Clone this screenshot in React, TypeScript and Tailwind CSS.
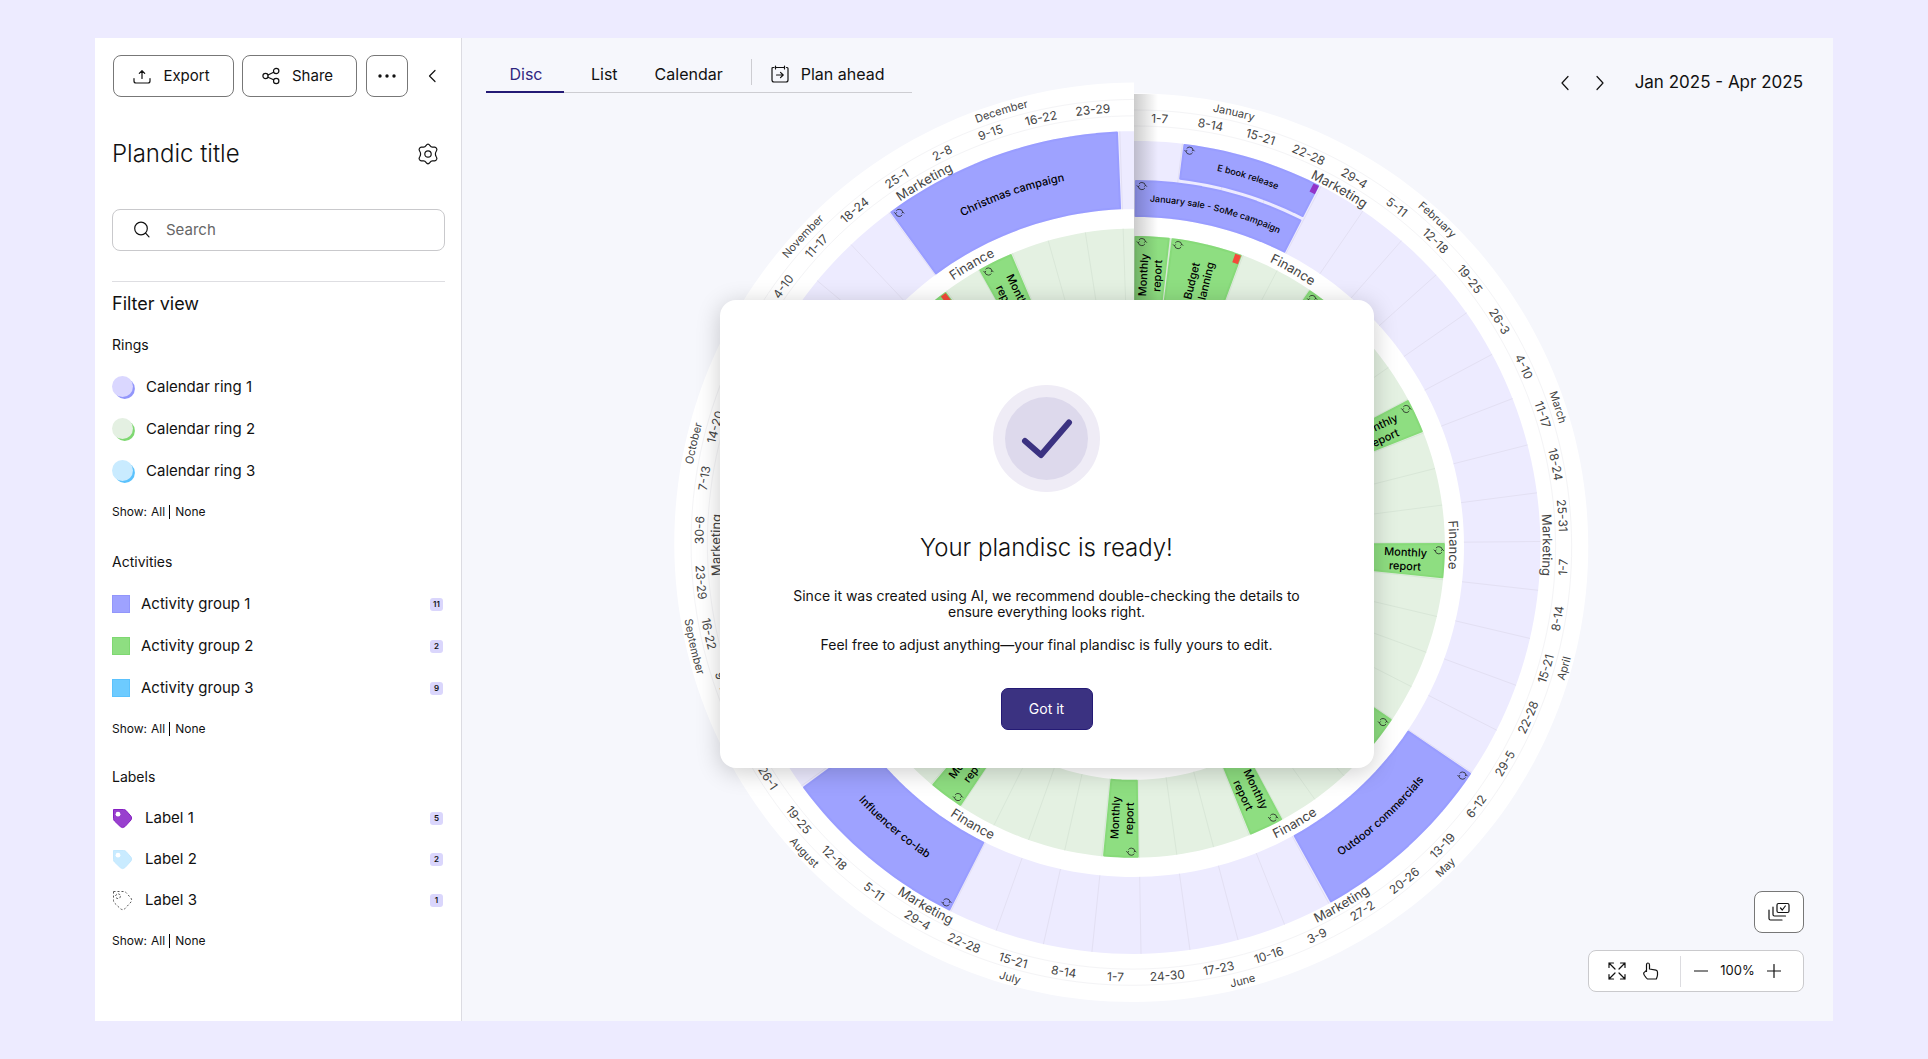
import { clsx } from "clsx";
import { ReactNode, useId } from "react";

const CX = 672;
const CY = 507;
const WEEK = (360 * 7) / 366;

// The disc is a spiral: every radius grows slightly from January to December
const grow = (r: number, deg: number) => r * (1 + (0.0243 * deg) / 360);

const point = (r: number, deg: number) => {
  const a = (deg * Math.PI) / 180;
  return `${(CX + r * Math.sin(a)).toFixed(2)} ${(CY - r * Math.cos(a)).toFixed(2)}`;
};

const arc = (from: number, to: number, r: number) => {
  const steps = Math.max(2, Math.ceil(Math.abs(to - from) / 1.5));
  return Array.from({ length: steps + 1 }, (_, i) => {
    const deg = from + ((to - from) * i) / steps;
    return point(grow(r, deg), deg);
  });
};

const band = (from: number, to: number, inner: number, outer: number) =>
  `M${[...arc(from, to, outer), ...arc(to, from, inner)].join("L")}Z`;

const weeks = [
  "1-7", "8-14", "15-21", "22-28", "29-4", "5-11", "12-18", "19-25", "26-3",
  "4-10", "11-17", "18-24", "25-31", "1-7", "8-14", "15-21", "22-28", "29-5",
  "6-12", "13-19", "20-26", "27-2", "3-9", "10-16", "17-23", "24-30", "1-7",
  "8-14", "15-21", "22-28", "29-4", "5-11", "12-18", "19-25", "26-1", "2-8",
  "9-15", "16-22", "23-29", "30-6", "7-13", "14-20", "21-27", "28-3", "4-10",
  "11-17", "18-24", "25-1", "2-8", "9-15", "16-22", "23-29",
];

const months = [
  { name: "January", deg: 13 },
  { name: "February", deg: 43 },
  { name: "March", deg: 72 },
  { name: "April", deg: 106 },
  { name: "May", deg: 136 },
  { name: "June", deg: 166 },
  { name: "July", deg: 196 },
  { name: "August", deg: 227 },
  { name: "September", deg: 257 },
  { name: "October", deg: 283 },
  { name: "November", deg: 313 },
  { name: "December", deg: 343 },
];

const marketing = [
  { title: "E book release", from: 1, to: 4, inner: 368, outer: 404, size: 9, tag: "#9333c8" },
  { title: "January sale - SoMe campaign", from: 0, to: 4, inner: 328, outer: 365, size: 9 },
  { title: "Outdoor commercials", from: 18, to: 22, inner: 328, outer: 404, size: 11 },
  { title: "Influencer co-lab", from: 30, to: 34, inner: 328, outer: 404, size: 11 },
  { title: "Christmas campaign", from: 47, to: 52, inner: 328, outer: 404, size: 11 },
];

const finance = [
  { lines: ["Monthly", "report"], from: 0, to: 1 },
  { lines: ["Budget", "planning"], from: 1, to: 3, tag: "#f44a3a" },
  { lines: ["Monthly", "report"], from: 5, to: 6 },
  { lines: ["Monthly", "report"], from: 9, to: 10 },
  { lines: ["Monthly", "report"], from: 13, to: 14 },
  { lines: ["Monthly", "report"], from: 18, to: 19 },
  { lines: ["Monthly", "report"], from: 22, to: 23 },
  { lines: ["Monthly", "report"], from: 26, to: 27 },
  { lines: ["Monthly", "report"], from: 31, to: 32 },
  { lines: ["Budget", "planning"], from: 45, to: 47, tag: "#f44a3a" },
  { lines: ["Monthly", "report"], from: 48, to: 49 },
];

type CurvedTextProps = {
  deg: number;
  r: number;
  size: number;
  className?: string;
  children: string;
};

const CurvedText = ({ deg, r, size, className, children }: CurvedTextProps): JSX.Element => {
  const id = useId();
  const flipped = deg > 91 && deg < 269;
  const radius = grow(r, deg) + (flipped ? size : -size) * 0.36;
  const a = flipped ? deg + 20 : deg - 20;
  const b = flipped ? deg - 20 : deg + 20;
  return (
    <>
      <path
        id={id}
        d={`M${point(radius, a)}A${radius} ${radius} 0 0 ${flipped ? 0 : 1} ${point(radius, b)}`}
        fill="none"
      />
      <text fontSize={size} textAnchor="middle" className={className}>
        <textPath href={`#${id}`} startOffset="50%">
          {children}
        </textPath>
      </text>
    </>
  );
};

const Segment = ({
  from,
  to,
  inner,
  outer,
  fill,
  stroke,
  tag,
}: {
  from: number;
  to: number;
  inner: number;
  outer: number;
  fill: string;
  stroke: string;
  tag?: string;
}): JSX.Element => {
  const start = from * WEEK;
  const end = to * WEEK;
  const iconDeg = start + (8 / outer) * 57.3;
  const [ix, iy] = point(grow(outer - 6, iconDeg), iconDeg).split(" ").map(Number);
  const tagDeg = end - (5 / outer) * 57.3;
  const [tx, ty] = point(grow(outer - 5, tagDeg), tagDeg).split(" ").map(Number);
  return (
    <>
      <path
        d={band(start + 0.3, end - 0.4, inner + 1, outer - 1)}
        fill={fill}
        stroke={stroke}
        strokeWidth="2"
        strokeLinejoin="round"
      />
      <g transform={`translate(${ix} ${iy})`} fill="none" stroke="#222" strokeWidth="0.8">
        <circle r="3.6" strokeDasharray="8.300 3" strokeDashoffset="-2" />
        <path d="M-5 -.6L-3.700 .8L-2.400 -.6M5 .6L3.700 -.8L2.400 .6" />
      </g>
      {tag && (
        <rect x="-3" y="-4" width="6" height="9" fill={tag} transform={`translate(${tx} ${ty}) rotate(${tagDeg})`} />
      )}
    </>
  );
};

const Disc = (): JSX.Element => (
  <svg viewBox="0 0 1371 983" className="h-full w-full" role="img" aria-label="Year disc">
    <defs>
      <linearGradient id="seam" x1="0" x2="1" y1="0" y2="0">
        <stop offset="0" stopColor="#000" stopOpacity="0.2" />
        <stop offset="0.4" stopColor="#000" stopOpacity="0.12" />
        <stop offset="1" stopColor="#000" stopOpacity="0" />
      </linearGradient>
      <clipPath id="half">
        <path d={band(0, 90, 0, 451)} />
      </clipPath>
    </defs>
    <path d={band(0, 360, 0, 451.5)} fill="#fff" />
    <path d={band(0, 360, 328, 404)} fill="#edebff" />
    <path d={band(0, 360, 232, 309)} fill="#e4f1e2" />
    <g fill="none" stroke="#f4f4f6">
      <path d={`M${arc(0, 360, 435).join("L")}`} />
      <path d={`M${arc(0, 360, 419).join("L")}`} />
    </g>
    {weeks.map((_, i) => {
      const deg = (i + 1) * WEEK;
      return (
        <g key={i}>
          <path d={`M${point(grow(328, deg), deg)}L${point(grow(404, deg), deg)}`} stroke="#e3e0f3" />
          <path d={`M${point(grow(232, deg), deg)}L${point(grow(309, deg), deg)}`} stroke="#d9e7d8" />
        </g>
      );
    })}
    {marketing.map((item) => (
      <g key={item.title}>
        <Segment {...item} fill="#9ea2ff" stroke="#999dff" />
        <CurvedText
          deg={((item.from + item.to) / 2) * WEEK}
          r={(item.inner + item.outer) / 2}
          size={item.size}
          className="fill-black font-medium"
        >
          {item.title}
        </CurvedText>
      </g>
    ))}
    {finance.map((item) => {
      const deg = ((item.from + item.to) / 2) * WEEK;
      const [x, y] = point(grow(270, deg), deg).split(" ").map(Number);
      return (
        <g key={item.from}>
          <Segment {...item} inner={232} outer={309} fill="#8ede81" stroke="#87da79" />
          <text
            transform={`translate(${x} ${y}) rotate(${deg > 180 ? deg + 90 : deg - 90})`}
            fontSize="11"
            textAnchor="middle"
            className="fill-black font-medium"
          >
            <tspan x="0" y="-3">{item.lines[0]}</tspan>
            <tspan x="0" y="11">{item.lines[1]}</tspan>
          </text>
        </g>
      );
    })}
    <rect x={CX} y="50" width="24" height="300" fill="url(#seam)" clipPath="url(#half)" />
    {weeks.map((week, i) => (
      <CurvedText key={i} deg={(i + 0.5) * WEEK} r={427} size={12} className="fill-[#444]">
        {week}
      </CurvedText>
    ))}
    {months.map(({ name, deg }) => (
      <CurvedText key={name} deg={deg} r={444} size={11} className="fill-[#444]">
        {name}
      </CurvedText>
    ))}
    {[30, 90, 150, 210, 270, 330].map((deg) => (
      <g key={deg}>
        <CurvedText deg={deg} r={411} size={13} className="fill-[#444]">
          Marketing
        </CurvedText>
        <CurvedText deg={deg} r={318} size={13} className="fill-[#444]">
          Finance
        </CurvedText>
      </g>
    ))}
  </svg>
);

const Icon = ({ size = 20, children }: { size?: number; children: ReactNode }): JSX.Element => (
  <svg
    width={size}
    height={size}
    viewBox={`0 0 ${size} ${size}`}
    fill="none"
    stroke="currentColor"
    strokeWidth="1.2"
    strokeLinecap="round"
    strokeLinejoin="round"
    aria-hidden="true"
    className="shrink-0"
  >
    {children}
  </svg>
);

const Chevron = ({ right }: { right?: boolean }): JSX.Element => (
  <Icon size={16}>
    <path d={right ? "M5 1.5L11 8L5 14.5" : "M11 1.5L5 8L11 14.5"} />
  </Icon>
);

const TagIcon = ({ fill, stroke, dashed }: { fill: string; stroke: string; dashed?: boolean }): JSX.Element => (
  <svg width="21" height="21" viewBox="0 0 21 21" aria-hidden="true" className="shrink-0">
    <path
      d="M1.500 1.500H11.500Q13 1.500 14 2.500L19 8.200Q20.300 10 19 12L13 18.600Q10.500 20.600 8.300 18.600L2.500 13Q1.500 12 1.500 10.500Z"
      fill={fill}
      stroke={stroke}
      strokeDasharray={dashed ? "2 2" : undefined}
    />
    <circle
      cx="6"
      cy="6.200"
      r="2.400"
      fill="#fff"
      stroke={dashed ? stroke : "none"}
      strokeDasharray={dashed ? "2 1.500" : undefined}
    />
  </svg>
);

const Section = ({
  title,
  className,
  children,
}: {
  title: string;
  className?: string;
  children: ReactNode;
}): JSX.Element => (
  <section className={className}>
    <h3 className="text-sm">{title}</h3>
    <ul className="mt-[11px]">{children}</ul>
    <p className="mt-[10px] flex items-center gap-1 text-xs leading-5">
      Show: <button type="button">All</button>
      <span className="h-[14px] w-px bg-black" />
      <button type="button" className="ml-px">None</button>
    </p>
  </section>
);

const Row = ({
  icon,
  label,
  count,
  className,
}: {
  icon: ReactNode;
  label: string;
  count?: number;
  className?: string;
}): JSX.Element => (
  <li className={clsx("flex items-center text-[15px]", className)}>
    {icon}
    <span className="flex-1">{label}</span>
    {count && (
      <span className="mr-[2px] h-[13px] w-[13px] rounded-[3px] bg-[#dad6fc] text-center text-[8px] leading-[13px] font-semibold">
        {count}
      </span>
    )}
  </li>
);

const Ring = ({ front, back }: { front: string; back: string }): JSX.Element => (
  <svg width="23" height="23" viewBox="0 0 23 23" aria-hidden="true" className="shrink-0">
    <circle cx="12.700" cy="12.700" r="10.200" fill={back} />
    <circle cx="10.500" cy="10.500" r="10.500" fill={front} />
  </svg>
);

const Sidebar = (): JSX.Element => (
  <aside className="w-[367px] shrink-0 border-r border-[#dcdce2] bg-white pt-[17px] pr-4 pl-[17px]">
    <div className="flex items-center">
      <button
        type="button"
        className="ml-px flex h-[42px] w-[121px] items-center justify-center gap-3 rounded-lg border border-[#777] pr-1 text-[15px]"
      >
        <Icon size={18}>
          <path d="M9 11.500V4M6.300 6.300L9 3.600L11.700 6.300M1 11.500V14Q1 16 3 16H15Q17 16 17 14V11.500" />
        </Icon>
        Export
      </button>
      <button
        type="button"
        className="ml-2 flex h-[42px] w-[115px] items-center justify-center gap-3 rounded-lg border border-[#777] pr-1 text-[15px]"
      >
        <Icon size={18}>
          <circle cx="3.500" cy="9" r="2.600" />
          <circle cx="14.200" cy="4" r="2.700" />
          <circle cx="14.200" cy="14" r="2.700" />
          <path d="M6 8L11.600 5.200M6 10.200L11.600 12.800" />
        </Icon>
        Share
      </button>
      <button
        type="button"
        aria-label="More"
        className="ml-[9px] flex h-[42px] w-[42px] items-center justify-center rounded-lg border border-[#777]"
      >
        <Icon size={18}>
          <g fill="currentColor" stroke="none">
            <circle cx="2" cy="9" r="1.700" />
            <circle cx="9" cy="9" r="1.700" />
            <circle cx="16" cy="9" r="1.700" />
          </g>
        </Icon>
      </button>
      <button type="button" aria-label="Collapse" className="ml-4">
        <Icon size={16}>
          <path d="M11 2.500L5.500 8L11 13.500" />
        </Icon>
      </button>
    </div>

    <div className="mt-[41px] flex h-8 items-center justify-between pr-[6px]">
      <h1 className="text-2xl font-light">Plandic title</h1>
      <button type="button" aria-label="Settings">
        <Icon size={22}>
          <path d="M11 1.200Q12 1.200 13 2.600Q14 4.200 15.600 4.100L17.600 4.100Q18.900 4.300 19.600 5.500Q20.300 6.800 19.400 8Q18.400 9.500 18.400 11Q18.400 12.500 19.400 14Q20.300 15.200 19.600 16.500Q18.900 17.700 17.600 17.900L15.600 17.900Q14 17.800 13 19.400Q12 20.800 11 20.800Q10 20.800 9 19.400Q8 17.800 6.400 17.900L4.400 17.900Q3.100 17.700 2.400 16.500Q1.700 15.200 2.600 14Q3.600 12.500 3.600 11Q3.600 9.500 2.600 8Q1.700 6.800 2.400 5.500Q3.100 4.300 4.400 4.100L6.400 4.100Q8 4.200 9 2.600Q10 1.200 11 1.200Z" />
          <circle cx="11" cy="11" r="3.200" />
        </Icon>
      </button>
    </div>

    <label className="mt-[39px] flex h-[42px] items-center rounded-lg border border-[#c9c9cc] pl-5">
      <Icon size={18}>
        <circle cx="8" cy="7.500" r="6.300" />
        <path d="M12.600 12.200L16 15.800" />
      </Icon>
      <input
        type="text"
        placeholder="Search"
        aria-label="Search"
        className="ml-[15px] w-full min-w-0 rounded-lg text-[15px] outline-none placeholder:text-[#666]"
      />
    </label>

    <hr className="mt-[30px] border-[#dedee2]" />
    <h2 className="mt-2 text-lg">Filter view</h2>

    <Section title="Rings" className="mt-[17px]">
      <Row className="h-[42px] gap-[11px]" icon={<Ring front="#dad7ff" back="#9296fb" />} label="Calendar ring 1" />
      <Row className="h-[42px] gap-[11px]" icon={<Ring front="#e4f0e2" back="#7ed871" />} label="Calendar ring 2" />
      <Row className="h-[42px] gap-[11px]" icon={<Ring front="#c9ebff" back="#5bc2fd" />} label="Calendar ring 3" />
    </Section>
    <Section title="Activities" className="mt-[30px]">
      <Row className="h-[42px] gap-[11px]" icon={<span className="h-[18px] w-[18px] border border-[#9296fb] bg-[#9ea2ff]" />} label="Activity group 1" count={11} />
      <Row className="h-[42px] gap-[11px]" icon={<span className="h-[18px] w-[18px] border border-[#7ed871] bg-[#8ede81]" />} label="Activity group 2" count={2} />
      <Row className="h-[42px] gap-[11px]" icon={<span className="h-[18px] w-[18px] border border-[#5bc2fd] bg-[#6dcbff]" />} label="Activity group 3" count={9} />
    </Section>
    <Section title="Labels" className="mt-7">
      <Row className="h-[41px] gap-3" icon={<TagIcon fill="#9840ce" stroke="#861fc2" />} label="Label 1" count={5} />
      <Row className="h-[41px] gap-3" icon={<TagIcon fill="#c9ebff" stroke="#c3e8fe" />} label="Label 2" count={2} />
      <Row className="h-[41px] gap-3" icon={<TagIcon fill="#fff" stroke="#555" dashed />} label="Label 3" count={1} />
    </Section>
  </aside>
);

const Header = (): JSX.Element => (
  <header className="flex items-start justify-between pt-4 pr-[30px] pl-6">
    <nav className="flex h-[39px] w-[426px] border-b border-[#cdcdd2] whitespace-nowrap">
      <button type="button" className="-mb-px w-[78px] border-b-2 border-[#241a75] pt-[2px] pl-[2px] text-base text-[#2f2680]">
        Disc
      </button>
      <button type="button" className="ml-[27px] pt-px text-base">List</button>
      <button type="button" className="ml-[37px] pt-px text-base">Calendar</button>
      <span className="mt-[5px] ml-7 h-[26px] w-px bg-[#cdcdd2]" />
      <button type="button" className="ml-[19px] flex items-center gap-3 pt-px text-base">
        <Icon size={18}>
          <path d="M1 3.500Q1 2.500 2 2.500H3M15.500 2.500H16Q17 2.500 17 3.500V15Q17 17 15 17H3Q1 17 1 15V3.500M4.500 1V4M4.500 2.500H13.500M13.500 1V4M5.500 10H12M9.500 7.300L12.200 10L9.500 12.700" />
        </Icon>
        Plan ahead
      </button>
    </nav>
    <div className="mt-4 flex items-center text-[17px]">
      <button type="button" aria-label="Previous"><Chevron /></button>
      <button type="button" aria-label="Next" className="ml-[19px]"><Chevron right /></button>
      <span className="ml-[27px]">Jan 2025 - Apr 2025</span>
    </div>
  </header>
);

const Toolbar = (): JSX.Element => (
  <div className="flex flex-col items-end gap-[17px] self-end justify-self-end pr-[29px] pb-[29px]">
    <button
      type="button"
      aria-label="Select activities"
      className="flex h-[42px] w-[50px] items-center justify-center rounded-lg border border-[#777] bg-white"
    >
      <Icon size={22}>
        <rect x="9" y="2.500" width="12" height="9" rx="1.500" />
        <path d="M12.500 7L14.300 9L17.300 5M5 6V13.500Q5 15 6.500 15H17.500M1 9V17.500Q1 19 2.500 19H14" />
      </Icon>
    </button>
    <div className="flex h-[42px] w-[216px] items-center rounded-lg border border-[#cacacd] bg-white">
      <button type="button" aria-label="Fit to screen" className="ml-[19px]">
        <Icon size={18}>
          <path d="M1 5.500V1H5.500M1 1L7 7M12.500 1H17V5.500M17 1L11 7M1 12.500V17H5.500M1 17L7 11M17 12.500V17H12.500M17 17L11 11" />
        </Icon>
      </button>
      <button type="button" aria-label="Pan" className="ml-4">
        <Icon size={18}>
          <path d="M4.500 9.500V3Q4.500 1 6 1Q7.500 1 7.500 3V7L14 8.200Q15.500 8.600 15.500 10.200V13Q15.300 14.600 14.300 17H5.500Q4.500 16.500 2.500 13.500Q1 11 2.300 10.300Q3.500 9.600 4.500 8.200" />
        </Icon>
      </button>
      <span className="ml-5 h-[31px] w-px bg-[#dcdce0]" />
      <button type="button" aria-label="Zoom out" className="ml-[13px]">
        <Icon size={14}><path d="M.5 7H13.500" /></Icon>
      </button>
      <span className="flex-1 text-center text-[13px]">100%</span>
      <button type="button" aria-label="Zoom in" className="mr-[22px]">
        <Icon size={14}><path d="M.5 7H13.500M7 .5V13.500" /></Icon>
      </button>
    </div>
  </div>
);

const ReadyDialog = (): JSX.Element => (
  <div
    role="dialog"
    aria-labelledby="ready-title"
    className="mt-2 mr-[202px] flex w-[654px] flex-col items-center self-center justify-self-center rounded-2xl bg-white px-[70px] pt-[85px] pb-[38px] text-center shadow-[0_4px_24px_rgba(0,0,0,0.2)]"
  >
    <svg width="107" height="107" viewBox="0 0 107 107" aria-hidden="true">
      <circle cx="53.500" cy="53.500" r="53.500" fill="#efecf6" />
      <circle cx="53.500" cy="53.500" r="41.500" fill="#ddd9ec" />
      <path
        d="M32 56L48 70L76 37.500"
        fill="none"
        stroke="#3b3281"
        strokeWidth="6"
        strokeLinecap="round"
        strokeLinejoin="round"
      />
    </svg>
    <h2 id="ready-title" className="mt-10 text-2xl font-light">
      Your plandisc is ready!
    </h2>
    <p className="mt-6 text-sm leading-4">
      Since it was created using AI, we recommend double-checking the details to ensure everything looks right.
    </p>
    <p className="mt-[17px] text-sm leading-4">
      Feel free to adjust anything—your final plandisc is fully yours to edit.
    </p>
    <button
      type="button"
      className="mt-[35px] h-[42px] w-[92px] rounded-[7px] border border-[#241a75] bg-[#3b3281] text-sm text-white"
    >
      Got it
    </button>
  </div>
);

export default function App(): JSX.Element {
  return (
    <div className="flex min-h-screen bg-[#edebff] px-[95px] py-[38px] font-['Inter',sans-serif] text-[#111]">
      <Sidebar />
      {/* disc, header, toolbar and dialog are stacked in one grid cell */}
      <main className="grid flex-1 bg-[#f6f7fc] *:[grid-area:1/1]">
        <Disc />
        <Header />
        <Toolbar />
        <ReadyDialog />
      </main>
    </div>
  );
}
